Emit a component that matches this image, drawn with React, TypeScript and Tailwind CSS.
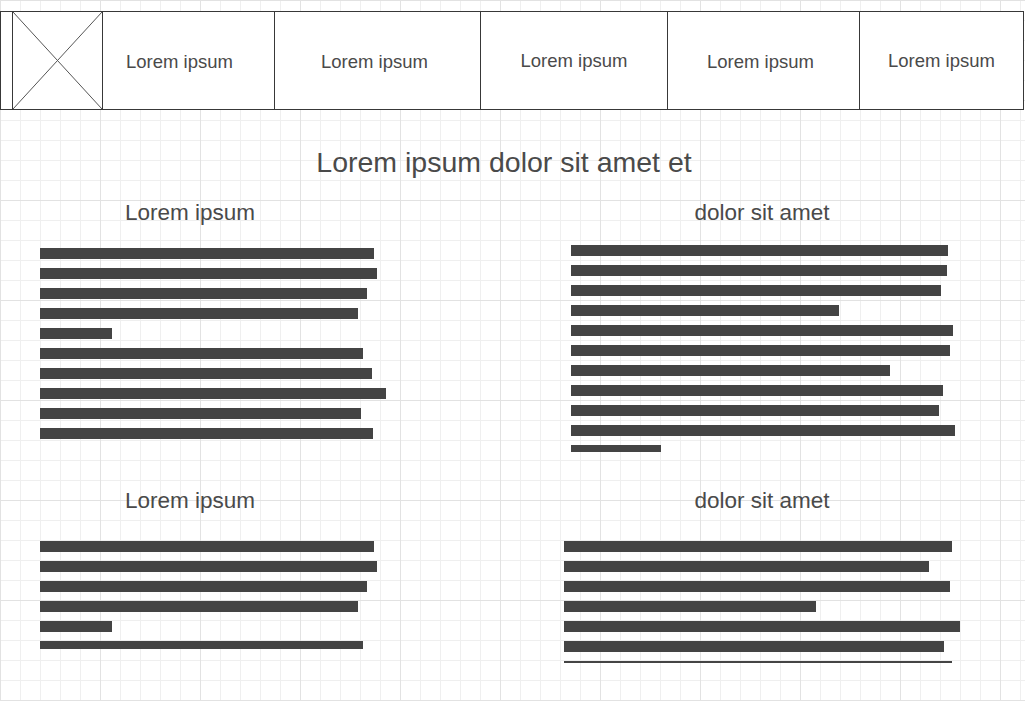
import React from "react";

const font = "font-['Liberation_Sans',Arial,sans-serif]";

const NavCell = ({ label, className }: { label: string; className: string }) => (
  <div className={`flex items-center justify-center border-l border-[#383838] ${className}`}>
    <span className="text-[18.5px] text-[#4a4a4a]">{label}</span>
  </div>
);

const Bars = ({ widths, last, className }: { widths: number[]; last?: string; className?: string }) => (
  <div className={`flex flex-col gap-[9px] ${className ?? ""}`}>
    {widths.map((w, i) => (
      <div
        key={i}
        className={`bg-[#444444] ${i === widths.length - 1 && last ? last : "h-[11px]"}`}
        style={{ width: w }}
      />
    ))}
  </div>
);

const Heading = ({ children }: { children: React.ReactNode }) => (
  <h2 className="pt-[1px] text-center text-[22.5px] leading-[26px] text-[#4a4a4a]">{children}</h2>
);

export default function App() {
  return (
    <div
      className={`${font} h-[701px] w-full overflow-hidden bg-white pt-[11px] [background-image:linear-gradient(to_right,#e2e2e2_1px,transparent_1px),linear-gradient(to_bottom,#e2e2e2_1px,transparent_1px),linear-gradient(to_right,#efefef_1px,transparent_1px),linear-gradient(to_bottom,#efefef_1px,transparent_1px)] [background-size:100px_100px,100px_100px,20px_20px,20px_20px]`}
    >
      {/* top navigation */}
      <div className="flex h-[99px] w-[1024px] border border-[#383838] bg-white">
        <div className="w-[11px]" />
        <div className="w-[90px] border-l border-[#383838]">
          <svg viewBox="0 0 89 97" preserveAspectRatio="none" className="h-full w-full">
            <line x1="0" y1="0" x2="89" y2="97" stroke="#555" strokeWidth="1" />
            <line x1="89" y1="0" x2="0" y2="97" stroke="#555" strokeWidth="1" />
          </svg>
        </div>
        <NavCell label="Lorem ipsum" className="w-[172px] pr-[18px] pt-[3px]" />
        <NavCell label="Lorem ipsum" className="w-[206px] pr-[6px] pt-[3px]" />
        <NavCell label="Lorem ipsum" className="w-[187px] pt-[1px]" />
        <NavCell label="Lorem ipsum" className="w-[192px] pr-[6px] pt-[3px]" />
        <NavCell label="Lorem ipsum" className="flex-1 pt-[1px]" />
      </div>

      {/* title */}
      <h1 className="mt-[36px] pr-[17px] text-center text-[28.5px] leading-[32px] text-[#4a4a4a]">
        Lorem ipsum dolor sit amet et
      </h1>

      {/* sections */}
      <div className="mt-[21px] grid grid-cols-[380px_396px] gap-x-[184px] gap-y-[35px] items-start">
        <div>
          <Heading>Lorem ipsum</Heading>
          <Bars className="ml-[40px] mt-[22px]" widths={[334, 337, 327, 318, 72, 323, 332, 346, 321, 333]} />
        </div>
        <div>
          <Heading>dolor sit amet</Heading>
          <Bars
            className="ml-[7px] mt-[19px]"
            widths={[377, 376, 370, 268, 382, 379, 319, 372, 368, 384, 90]}
            last="h-[7px]"
          />
        </div>
        <div>
          <Heading>Lorem ipsum</Heading>
          <Bars className="ml-[40px] mt-[27px]" widths={[334, 337, 327, 318, 72, 323]} last="h-[8px]" />
        </div>
        <div>
          <Heading>dolor sit amet</Heading>
          <Bars className="mt-[27px]" widths={[388, 365, 386, 252, 396, 380, 388]} last="h-[2px]" />
        </div>
      </div>
    </div>
  );
}
